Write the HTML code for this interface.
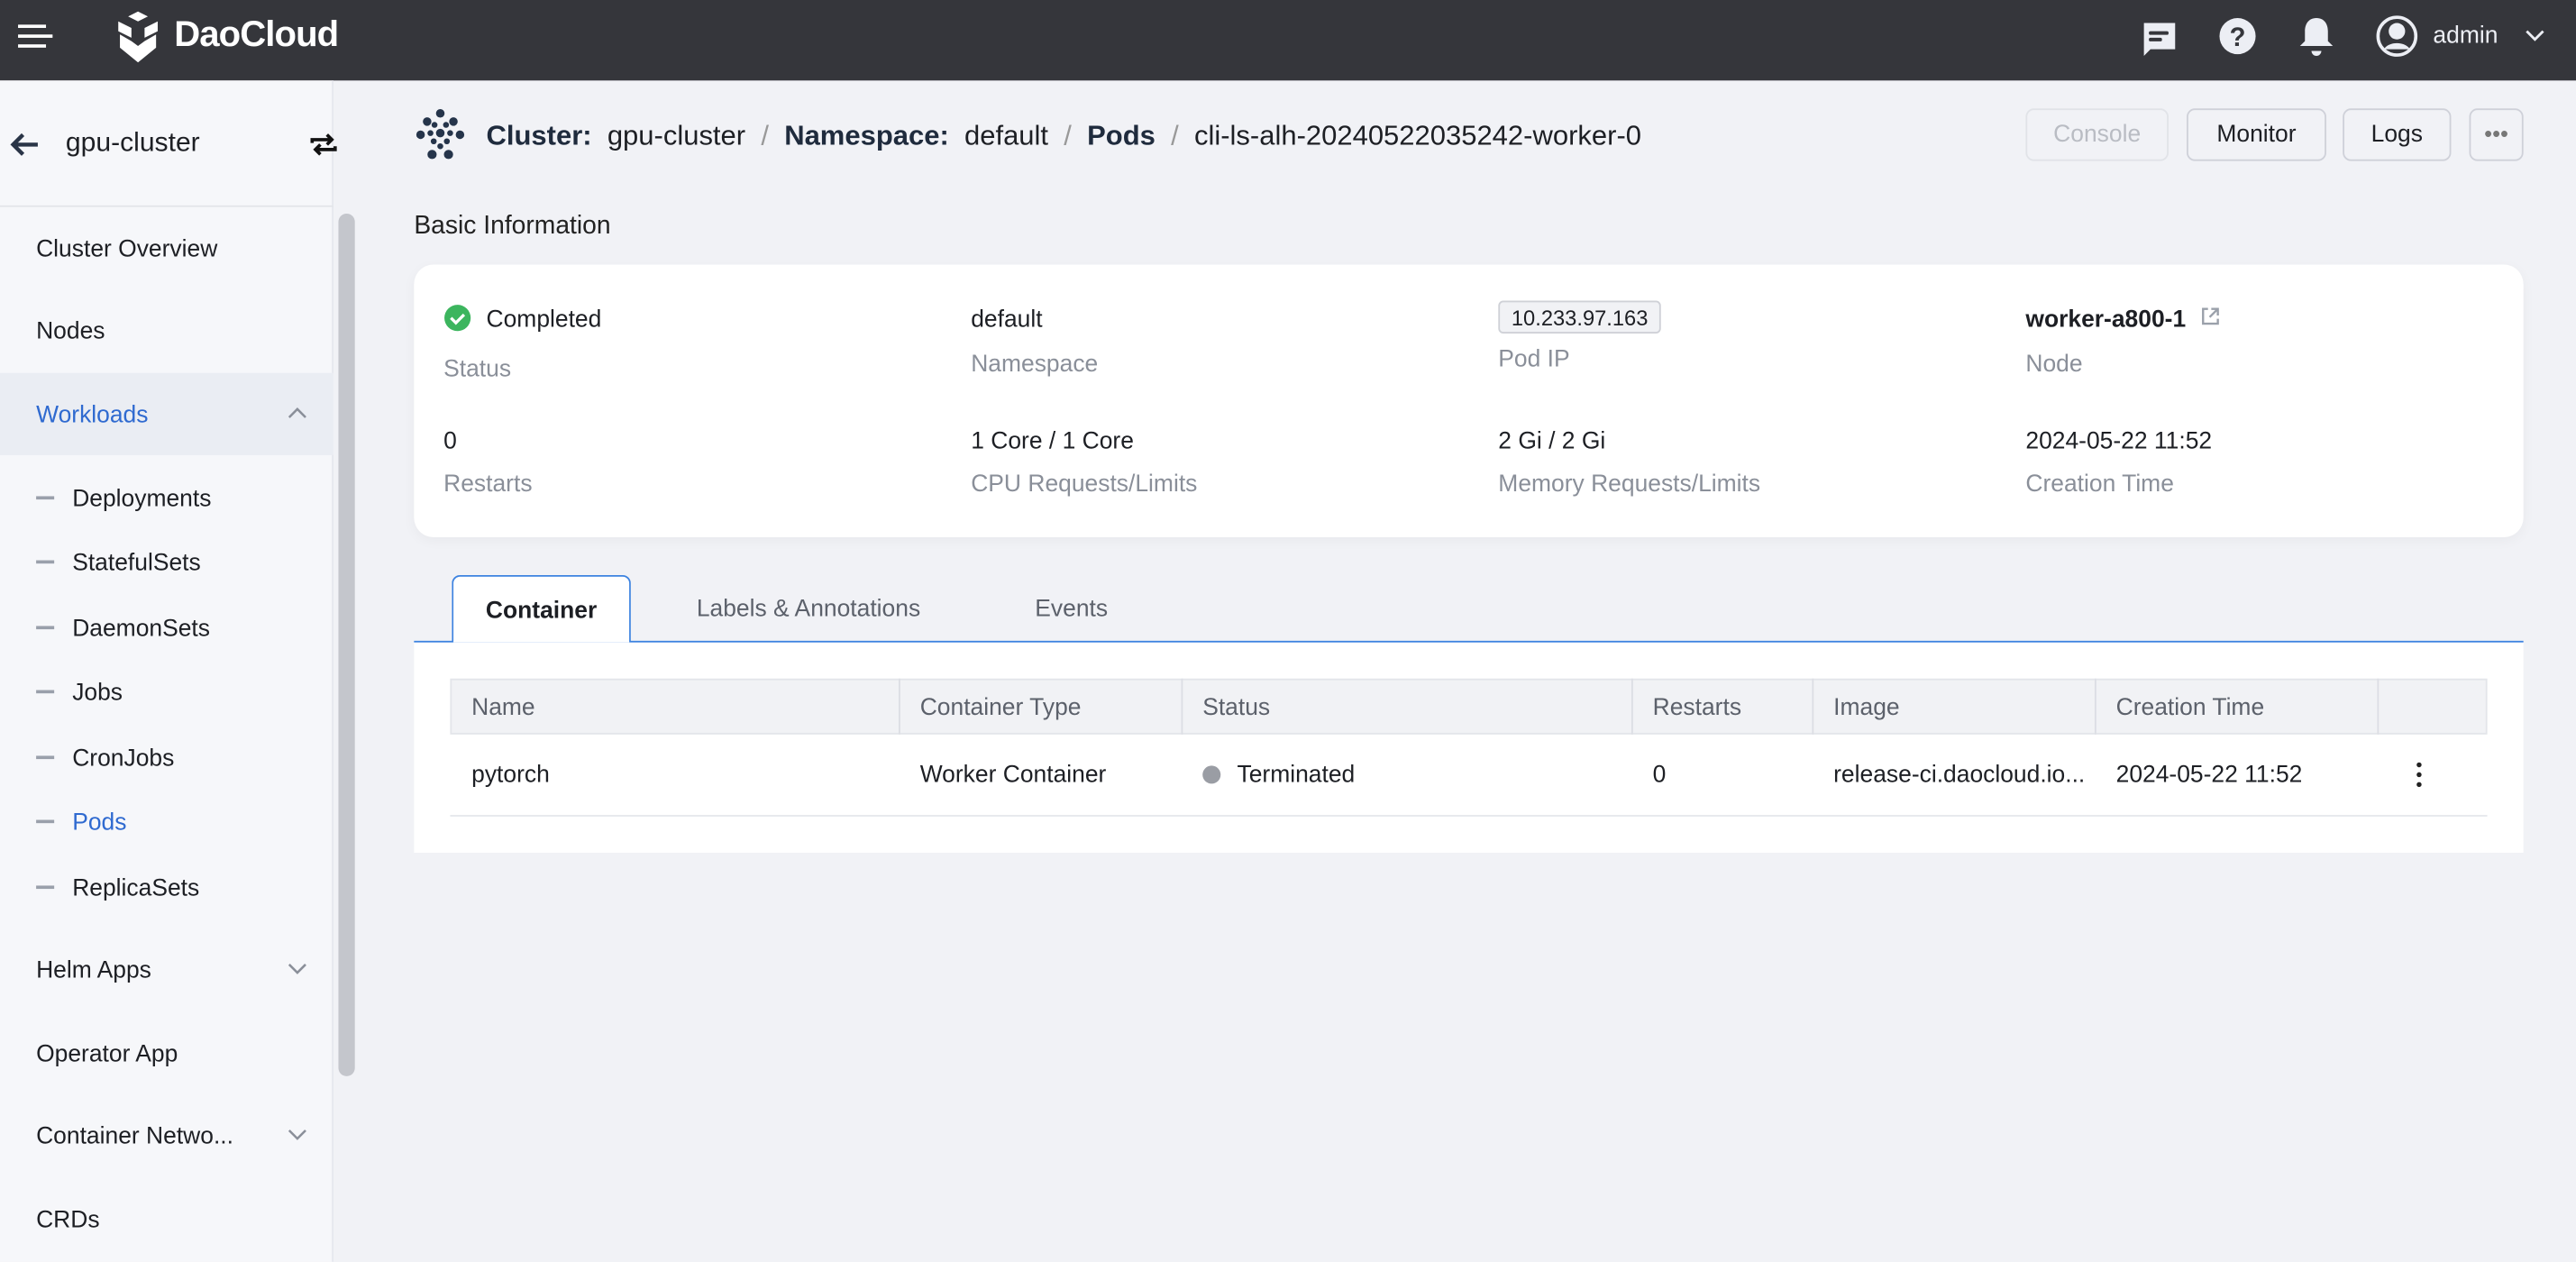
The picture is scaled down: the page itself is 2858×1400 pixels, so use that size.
<!DOCTYPE html>
<html><head><meta charset="utf-8"><style>
*{box-sizing:border-box;margin:0;padding:0}
html,body{width:2858px;height:1400px;overflow:hidden;background:#f1f2f6}
#w{width:1568px;height:768px;transform:scale(1.82270);transform-origin:0 0;position:relative;font-family:"Liberation Sans",sans-serif;color:#1d1f24;font-size:14.5px}
.a{position:absolute}
.top{left:0;top:0;width:1568px;height:49px;background:#35363b}
.side{left:0;top:49px;width:203px;height:719px;background:#f6f7fa;border-right:1px solid #e6e8ee}
.mi{position:absolute;left:22px;font-size:14.5px;color:#1d1f24;margin-top:2px}
.sub{position:absolute;left:44px;font-size:14.5px;margin-top:1.5px}
.dash{position:absolute;left:22px;width:11px;height:1.5px;background:#9aa0ab}
.lbl{color:#8a8f99;font-size:14.5px;margin-top:1.5px}
.val{font-size:14.5px;color:#1d1f24;margin-top:1.5px}
.btn{position:absolute;top:66px;height:32px;border:1.5px solid #cfd1d9;border-radius:5px;text-align:center;line-height:31px;font-size:14.5px;background:#f1f2f6}
.th{position:absolute;top:414px;height:34px;line-height:34px;color:#5c616b;font-size:14.5px}
.td{position:absolute;top:448px;height:49px;line-height:49px;font-size:14.5px}
.vl{position:absolute;top:413px;width:1px;height:34px;background:#dcdee4}
</style></head><body><div id="w">
<div class="a top">
 <div class="a" style="left:11px;top:15px;width:17px;height:2px;background:#fff"></div>
 <div class="a" style="left:11px;top:21px;width:21px;height:2px;background:#fff"></div>
 <div class="a" style="left:11px;top:27px;width:17px;height:2px;background:#fff"></div>
 <svg class="a" style="left:68px;top:5px" width="32" height="34" viewBox="0 0 32 34"><path d="M16 2l6 3-6 3-6-3z M4 8l8 4v6l-8-4z M28 8l-8 4v6l8-4z M5 16l7 4 4 3 4-3 7-4v8l-11 9-11-9z" fill="#fff"/></svg>
 <div class="a" style="left:106px;top:8px;color:#fff;font-size:22px;font-weight:bold;letter-spacing:-0.5px">DaoCloud</div>
 <svg class="a" style="left:1302px;top:12px" width="24" height="24" viewBox="0 0 24 24"><path d="M2 2h20v16H7l-4 4V2z" fill="#eceef4"/><rect x="6" y="7" width="12" height="2.2" rx="1" fill="#35363b"/><rect x="6" y="11" width="8" height="2.2" rx="1" fill="#35363b"/></svg>
 <svg class="a" style="left:1350px;top:10px" width="24" height="24" viewBox="0 0 24 24"><circle cx="12" cy="12" r="11" fill="#eceef4"/><text x="12" y="18" font-size="16" font-weight="bold" text-anchor="middle" fill="#35363b" font-family="Liberation Sans">?</text></svg>
 <svg class="a" style="left:1398px;top:10px" width="24" height="26" viewBox="0 0 24 26"><path d="M12 1c-5 0-7 4-7 8v6l-3 3h20l-3-3V9c0-4-2-8-7-8z M9 21a3 3 0 0 0 6 0z" fill="#eceef4"/></svg>
 <svg class="a" style="left:1446px;top:9px" width="26" height="26" viewBox="0 0 26 26"><circle cx="13" cy="13" r="11.5" fill="none" stroke="#eceef4" stroke-width="2"/><circle cx="13" cy="10" r="5" fill="#eceef4"/><path d="M5 21c3-5 13-5 16 0" fill="#eceef4"/></svg>
 <div class="a" style="left:1481px;top:14px;color:#eceef4;font-size:14.5px">admin</div>
 <svg class="a" style="left:1536px;top:17px" width="14" height="10"><path d="M2 2l5 5 5-5" stroke="#eceef4" stroke-width="1.6" fill="none"/></svg>
</div>
<div class="a side">
 <svg class="a" style="left:5px;top:30px" width="20" height="18"><path d="M18 9H3M9 3L3 9l6 6" stroke="#2a3547" stroke-width="2.4" fill="none"/></svg>
 <div class="a" style="left:40px;top:29px;font-size:16.5px;color:#1d1f24">gpu-cluster</div>
 <svg class="a" style="left:188px;top:31px" width="18" height="16"><path d="M2 7V5h12M11 2l3 3-3 3M16 9v2H4M7 14l-3-3 3-3" stroke="#111" stroke-width="2" fill="none"/></svg>
 <div class="a" style="left:0;top:76px;width:203px;height:1px;background:#e3e5ea"></div>
 <div class="mi" style="top:93px">Cluster Overview</div>
 <div class="mi" style="top:143px">Nodes</div>
 <div class="a" style="left:0;top:178px;width:203px;height:50px;background:#eaedf3"></div>
 <div class="mi" style="top:194px;color:#2f6ad0">Workloads</div>
 <svg class="a" style="left:175px;top:198px" width="12" height="8"><path d="M1 7l5-5 5 5" stroke="#8a8f99" stroke-width="1.4" fill="none"/></svg>
 <div class="dash" style="top:253px"></div><div class="sub" style="top:245px">Deployments</div>
 <div class="dash" style="top:292px"></div><div class="sub" style="top:284px">StatefulSets</div>
 <div class="dash" style="top:332px"></div><div class="sub" style="top:324px">DaemonSets</div>
 <div class="dash" style="top:371px"></div><div class="sub" style="top:363px">Jobs</div>
 <div class="dash" style="top:411px"></div><div class="sub" style="top:403px">CronJobs</div>
 <div class="dash" style="top:450px"></div><div class="sub" style="top:442px;color:#2f6ad0">Pods</div>
 <div class="dash" style="top:490px"></div><div class="sub" style="top:482px">ReplicaSets</div>
 <div class="mi" style="top:532px">Helm Apps</div>
 <svg class="a" style="left:175px;top:537px" width="12" height="8"><path d="M1 1l5 5 5-5" stroke="#8a8f99" stroke-width="1.4" fill="none"/></svg>
 <div class="mi" style="top:583px">Operator App</div>
 <div class="mi" style="top:633px">Container Netwo...</div>
 <svg class="a" style="left:175px;top:638px" width="12" height="8"><path d="M1 1l5 5 5-5" stroke="#8a8f99" stroke-width="1.4" fill="none"/></svg>
 <div class="mi" style="top:684px">CRDs</div>
</div>
<div class="a" style="left:206px;top:130px;width:10px;height:525px;background:#c4c6cc;border-radius:5px"></div>
<svg class="a" style="left:252px;top:66px" width="34" height="32" viewBox="0 0 34 32"><g fill="#25344a"><circle cx="16" cy="3" r="2.6"/><circle cx="8" cy="8" r="2.6"/><circle cx="24" cy="8" r="2.6"/><circle cx="12.5" cy="10" r="1.8"/><circle cx="19.5" cy="10" r="1.8"/><circle cx="4" cy="16" r="2.6"/><circle cx="28" cy="16" r="2.6"/><circle cx="10" cy="15" r="1.8"/><circle cx="22" cy="15" r="1.8"/><circle cx="16" cy="15" r="2.6"/><circle cx="12" cy="20" r="1.8"/><circle cx="20" cy="20" r="1.8"/><circle cx="16" cy="23" r="1.8"/><circle cx="11" cy="28" r="2.8"/><circle cx="21" cy="28" r="2.8"/></g></svg>
<div class="a" style="left:296px;top:73px;font-size:17px;white-space:nowrap;color:#1d1f24"><b style="color:#1f2b3d">Cluster:</b>&nbsp; gpu-cluster &nbsp;<span style="color:#999">/</span>&nbsp; <b style="color:#1f2b3d">Namespace:</b>&nbsp; default &nbsp;<span style="color:#999">/</span>&nbsp; <b style="color:#1f2b3d">Pods</b> &nbsp;<span style="color:#999">/</span>&nbsp; cli-ls-alh-20240522035242-worker-0</div>
<div class="btn" style="left:1233px;width:87px;border-color:#e1e3e8;color:#b9bcc3">Console</div>
<div class="btn" style="left:1331px;width:85px">Monitor</div>
<div class="btn" style="left:1426px;width:66px">Logs</div>
<div class="btn" style="left:1503px;width:33px;color:#777;line-height:28px;font-size:14px;letter-spacing:0px">•••</div>
<div class="a" style="left:252px;top:129px;font-size:15.5px;color:#222">Basic Information</div>
<div class="a" style="left:252px;top:161px;width:1284px;height:166px;background:#fff;border-radius:12px;box-shadow:0 2px 8px rgba(0,0,0,.04)"></div>
<svg class="a" style="left:270px;top:185px" width="17" height="17"><circle cx="8.5" cy="8.5" r="8" fill="#3cb55e"/><path d="M4.5 8.5l3 3 5-5" stroke="#fff" stroke-width="1.8" fill="none"/></svg>
<div class="a val" style="left:296px;top:185px">Completed</div>
<div class="a lbl" style="left:270px;top:215px">Status</div>
<div class="a val" style="left:591px;top:185px">default</div>
<div class="a lbl" style="left:591px;top:212px">Namespace</div>
<div class="a" style="left:912px;top:183px;height:20px;padding:0 7px;border:1px solid #cfd1d7;background:#f1f2f5;border-radius:3px;font-size:13px;line-height:19px">10.233.97.163</div>
<div class="a lbl" style="left:912px;top:209px">Pod IP</div>
<div class="a val" style="left:1233px;top:185px;font-weight:bold">worker-a800-1</div>
<svg class="a" style="left:1339px;top:186px" width="13" height="13"><path d="M5 2H2v9h9V8M7 2h4v4M11 2L6 7" stroke="#9aa0aa" stroke-width="1.3" fill="none"/></svg>
<div class="a lbl" style="left:1233px;top:212px">Node</div>
<div class="a val" style="left:270px;top:259px">0</div><div class="a lbl" style="left:270px;top:285px">Restarts</div>
<div class="a val" style="left:591px;top:259px">1 Core / 1 Core</div><div class="a lbl" style="left:591px;top:285px">CPU Requests/Limits</div>
<div class="a val" style="left:912px;top:259px">2 Gi / 2 Gi</div><div class="a lbl" style="left:912px;top:285px">Memory Requests/Limits</div>
<div class="a val" style="left:1233px;top:259px">2024-05-22 11:52</div><div class="a lbl" style="left:1233px;top:285px">Creation Time</div>
<div class="a" style="left:252px;top:390px;width:1284px;height:129px;background:#fff"></div>
<div class="a" style="left:252px;top:390px;width:1284px;height:1px;background:#3c82e0"></div>
<div class="a" style="left:275px;top:350px;width:109px;height:41px;background:#fff;border:1px solid #3c82e0;border-bottom:none;border-radius:5px 5px 0 0;text-align:center;line-height:42px;font-weight:bold;color:#1d1f24">Container</div>
<div class="a" style="left:424px;top:363px;color:#5c616b">Labels &amp; Annotations</div>
<div class="a" style="left:630px;top:363px;color:#5c616b">Events</div>
<div class="a" style="left:274px;top:413px;width:1240px;height:34px;background:#f1f2f5;border:1px solid #e3e5ea"></div>
<div class="vl" style="left:547px"></div><div class="vl" style="left:719px"></div><div class="vl" style="left:993px"></div><div class="vl" style="left:1103px"></div><div class="vl" style="left:1275px"></div><div class="vl" style="left:1447px"></div>
<div class="th" style="left:287px">Name</div><div class="th" style="left:560px">Container Type</div><div class="th" style="left:732px">Status</div><div class="th" style="left:1006px">Restarts</div><div class="th" style="left:1116px">Image</div><div class="th" style="left:1288px">Creation Time</div>
<div class="a" style="left:274px;top:496px;width:1240px;height:1px;background:#e6e8ec"></div>
<div class="td" style="left:287px">pytorch</div><div class="td" style="left:560px">Worker Container</div>
<div class="a" style="left:732px;top:466px;width:11px;height:11px;border-radius:50%;background:#9a9da4"></div>
<div class="td" style="left:753px">Terminated</div><div class="td" style="left:1006px">0</div><div class="td" style="left:1116px">release-ci.daocloud.io...</div><div class="td" style="left:1288px">2024-05-22 11:52</div>
<div class="a" style="left:1471px;top:464px;width:3px;height:3px;background:#222;border-radius:50%;box-shadow:0 6px 0 #222,0 12px 0 #222"></div>
</div></body></html>
